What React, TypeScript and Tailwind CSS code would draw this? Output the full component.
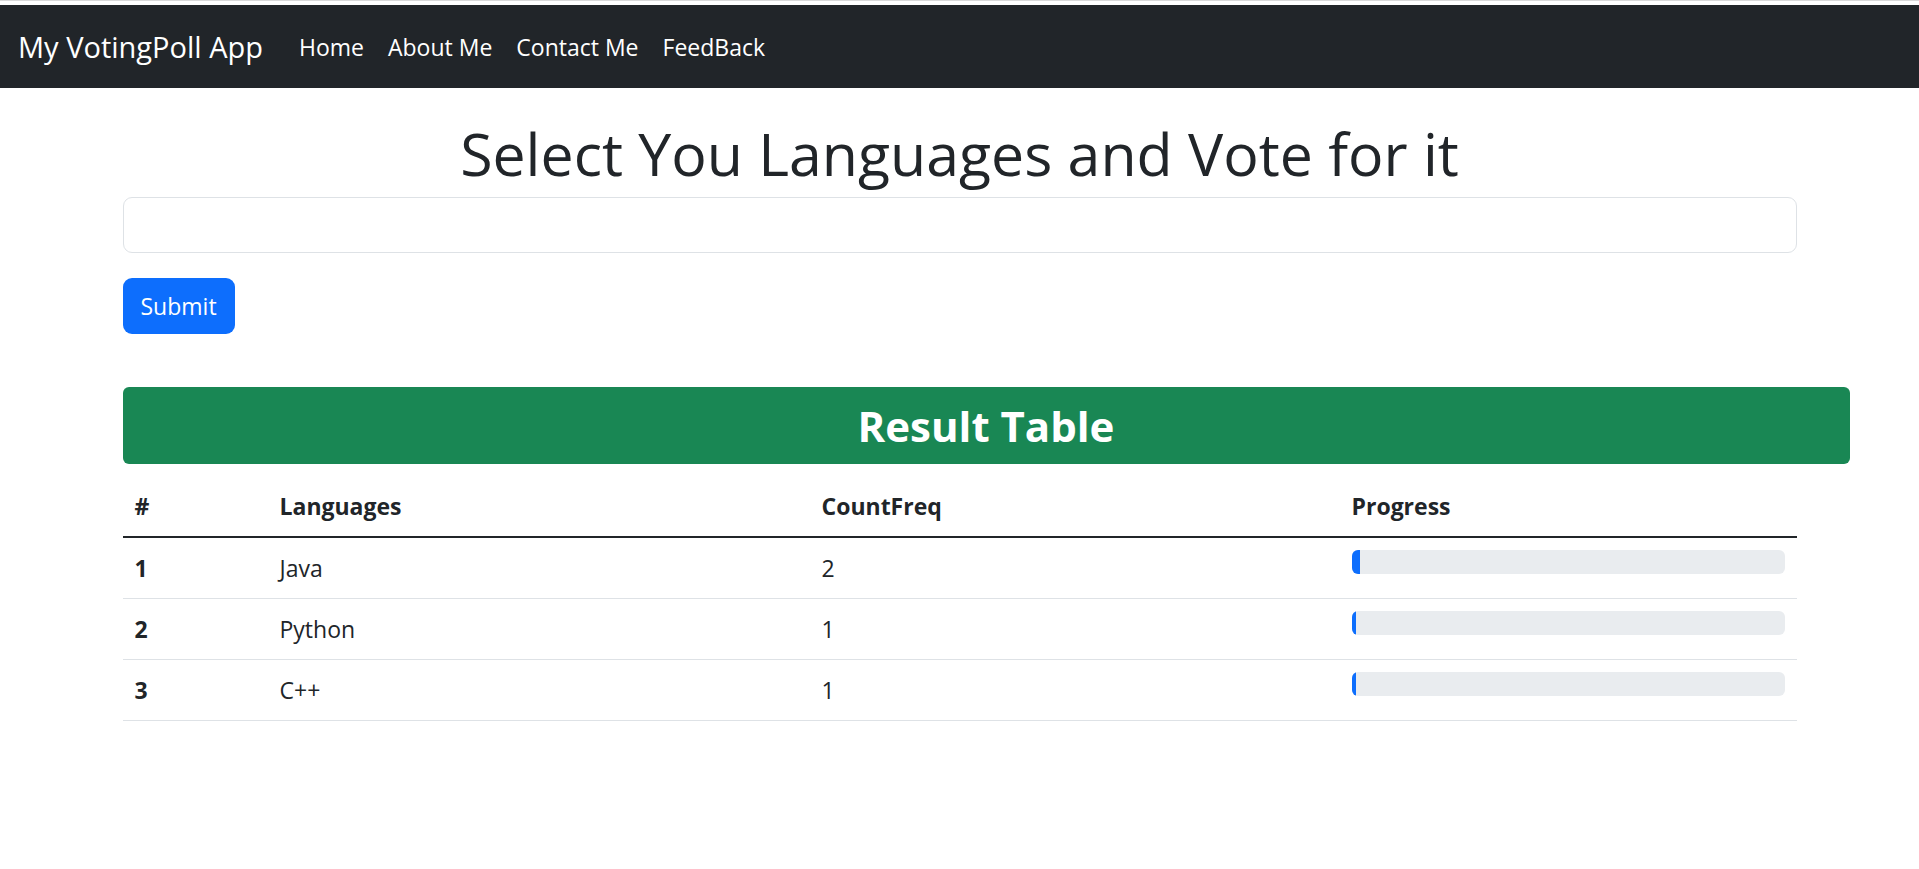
const rows = [
  { id: 1, lang: 'Java', count: 2 },
  { id: 2, lang: 'Python', count: 1 },
  { id: 3, lang: 'C++', count: 1 },
];

const font = { fontFamily: '"Segoe UI", "Open Sans", "Noto Sans", sans-serif' };

export default function App() {
  return (
    <div className="min-h-screen bg-white text-[#212529]" style={font}>
      {/* top strip */}
      <div className="h-[5px] border-t border-[#d9d9d9] bg-white" />

      <nav className="flex h-[83px] items-center bg-[#212529] px-[18px]">
        <a className="mr-[24px] text-[29px] leading-[45px] text-white">My VotingPoll App</a>
        <ul className="flex items-center">
          {['Home', 'About Me', 'Contact Me', 'FeedBack'].map(l => (
            <li key={l}>
              <a className="block px-[12px] text-[23px] leading-[36px] text-white">{l}</a>
            </li>
          ))}
        </ul>
      </nav>

      <div className="mx-auto w-[1710px] px-[18px]">
        <h1 className="mt-[29px] text-center text-[59px] font-medium leading-[72px]">
          Select You Languages and Vote for it
        </h1>
        <input
          type="text"
          className="mt-[8px] block h-[56px] w-full rounded-[9px] border border-[#dee2e6] px-[18px] text-[24px] outline-none"
        />
        <button className="mt-[25px] h-[56px] rounded-[9px] bg-[#0d6efd] px-[18px] text-[23px] leading-[36px] text-white">
          Submit
        </button>

        <div className="mt-[53px] flex h-[77px] w-[1727px] items-center justify-center rounded-[6px] bg-[#198754]">
          <h2 className="text-[42px] font-bold leading-[50px] text-white">Result Table</h2>
        </div>

        <table className="mt-[12px] w-full border-collapse text-[23px] leading-[36px]">
          <thead>
            <tr className="border-b-2 border-[#212529]">
              <th className="w-[145px] p-[12px] text-left font-bold">#</th>
              <th className="w-[542px] p-[12px] text-left font-bold">Languages</th>
              <th className="w-[530px] p-[12px] text-left font-bold">CountFreq</th>
              <th className="p-[12px] text-left font-bold">Progress</th>
            </tr>
          </thead>
          <tbody>
            {rows.map(r => (
              <tr key={r.id} className="border-b border-[#dee2e6]">
                <th className="p-[12px] text-left font-bold">{r.id}</th>
                <td className="p-[12px]">{r.lang}</td>
                <td className="p-[12px]">{r.count}</td>
                <td className="p-[12px] align-top">
                  <div className="flex h-[24px] w-full overflow-hidden rounded-[6px] bg-[#e9ecef]">
                    <div className="h-full bg-[#0d6efd]" style={{ width: `${r.count}%` }} />
                  </div>
                </td>
              </tr>
            ))}
          </tbody>
        </table>
      </div>
    </div>
  );
}
